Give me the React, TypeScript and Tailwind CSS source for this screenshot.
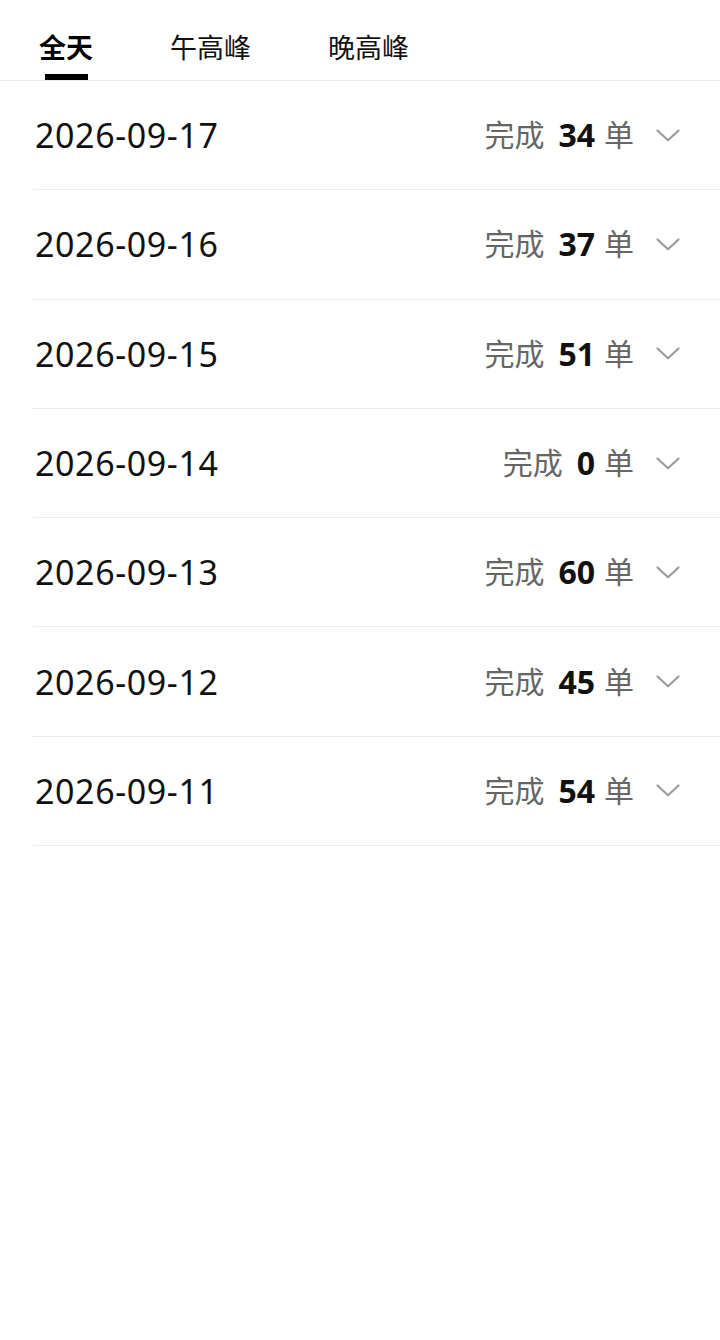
import React from 'react';

const tabs = ['全天', '午高峰', '晚高峰'];

const days = [
  { date: '2026-09-17', count: 34 },
  { date: '2026-09-16', count: 37 },
  { date: '2026-09-15', count: 51 },
  { date: '2026-09-14', count: 0 },
  { date: '2026-09-13', count: 60 },
  { date: '2026-09-12', count: 45 },
  { date: '2026-09-11', count: 54 },
];

const Chevron = () => (
  <svg width="24" height="13" viewBox="0 0 24 13" fill="none">
    <polyline
      points="1.5,1.5 12,11.2 22.5,1.5"
      stroke="#9b9b9b"
      strokeWidth="2.2"
      strokeLinecap="round"
      strokeLinejoin="round"
    />
  </svg>
);

export default function App() {
  return (
    <div className="w-[720px] min-h-[1340px] bg-white font-['Noto_Sans','Noto_Sans_CJK_SC',sans-serif] text-[#111]">
      <div className="flex items-end gap-[77px] h-[81px] pl-[39px] border-b border-[#ededed]">
        {tabs.map((t, i) => (
          <div key={t} className="flex flex-col items-center">
            <span className={`text-[27px] leading-[34px] ${i === 0 ? 'font-bold text-black' : 'text-[#111]'}`}>
              {t}
            </span>
            <div className={`mt-[9px] h-[6px] w-[43px] ${i === 0 ? 'bg-black' : 'bg-transparent'}`} />
          </div>
        ))}
      </div>

      <div>
        {days.map((d) => (
          <div
            key={d.date}
            className="ml-[33px] h-[109.3px] flex items-center justify-between pr-[40px] border-b border-[#ececec]"
          >
            <span className="pl-[2px] text-[34px] leading-none tracking-[0.6px] text-[#111]">{d.date}</span>
            <div className="flex items-center">
              <span className="text-[30px] leading-none text-[#666]">完成</span>
              <span className="ml-[14px] text-[32px] leading-none font-bold text-[#111]">{d.count}</span>
              <span className="ml-[9px] text-[30px] leading-none text-[#666]">单</span>
              <span className="ml-[22px] flex items-center">
                <Chevron />
              </span>
            </div>
          </div>
        ))}
      </div>
    </div>
  );
}
